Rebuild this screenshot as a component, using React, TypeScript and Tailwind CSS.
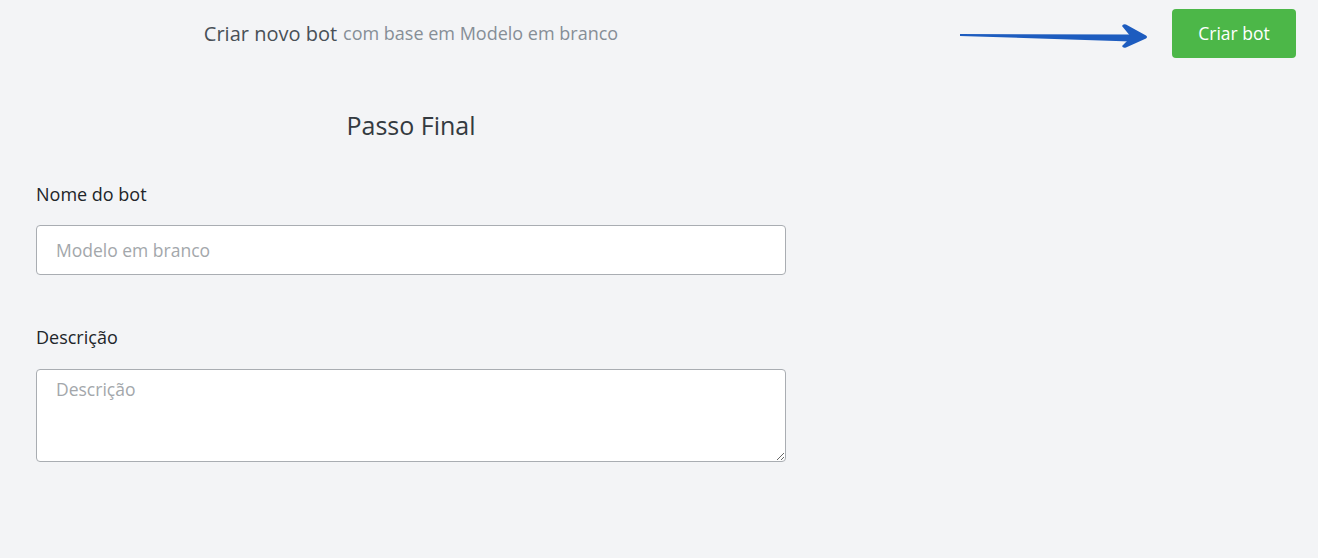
export default function App() {
  return (
    <div className="relative min-h-[558px] w-full bg-[#f3f4f6] font-['Open_Sans',sans-serif]">
      <div className="flex items-start justify-between pr-[22px] pt-[9px]">
        <div className="ml-[36px] flex h-[49px] w-[750px] items-center justify-center">
          <span className="text-[20px] text-[#495057]">Criar novo bot</span>
          <span className="ml-[6px] text-[18px] text-[#868e96]">com base em Modelo em branco</span>
        </div>
        <button className="h-[49px] w-[124px] rounded-[4px] bg-[#4cb748] text-[17.5px] text-white">
          Criar bot
        </button>
      </div>

      {/* annotation arrow */}
      <svg className="absolute left-[955px] top-[20px]" width="200" height="32" viewBox="0 0 200 32">
        <path d="M5 14 L176 14.5 L176 21.5 L5 16 Z" fill="#1d5cbf" />
        <path
          d="M167 6 Q168 3.5 171 4.5 L191 15.5 Q193 17 191 18.5 L171 27.5 Q168 28.5 167 26 L176 17 Z"
          fill="#1d5cbf"
        />
      </svg>

      <div className="ml-[36px] w-[750px]">
        <h2 className="mt-[51px] text-center text-[25px] leading-[32px] text-[#343a40]">Passo Final</h2>

        <label className="mt-[41px] block text-[18px] leading-[24px] font-medium text-[#212529]">
          Nome do bot
        </label>
        <input
          type="text"
          placeholder="Modelo em branco"
          className="mt-[19px] block h-[50px] w-full rounded-[4px] border border-[#a9adb2] bg-white px-[19px] text-[17.5px] text-[#212529] placeholder:text-[#a3a7ab] outline-none"
        />

        <label className="mt-[50px] block text-[18px] leading-[24px] font-medium text-[#212529]">
          Descrição
        </label>
        <textarea
          placeholder="Descrição"
          className="mt-[20px] block h-[93px] w-full rounded-[4px] border border-[#a9adb2] bg-white px-[19px] py-[6px] text-[17.5px] text-[#212529] placeholder:text-[#a3a7ab] outline-none"
        />
      </div>
    </div>
  );
}
